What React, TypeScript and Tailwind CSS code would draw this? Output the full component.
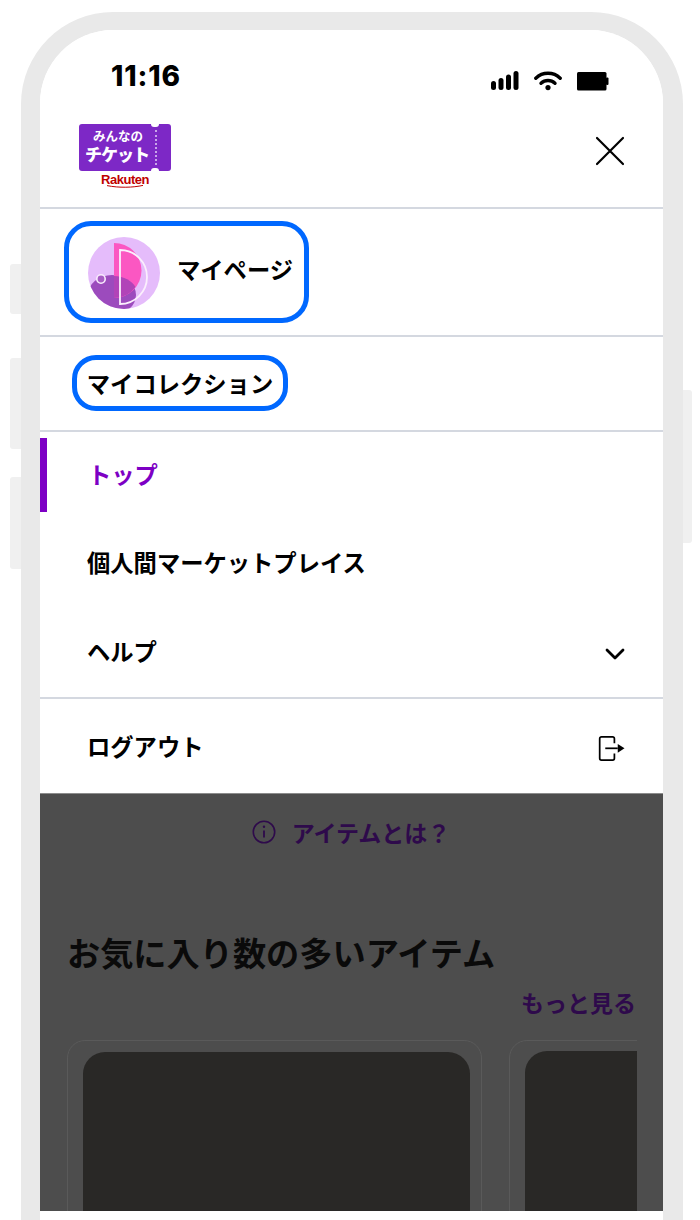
const JP = "font-['Noto_Sans_CJK_JP','Noto_Sans',sans-serif]"

function SignalIcon() {
  return (
    <svg width="28" height="20" viewBox="0 0 28 20" fill="#000">
      <rect x="0" y="10" width="5" height="9" rx="2.5" />
      <rect x="7.5" y="7" width="5" height="12" rx="2.5" />
      <rect x="15" y="3.5" width="5" height="15.5" rx="2.5" />
      <rect x="22.5" y="0" width="5" height="19" rx="2.5" />
    </svg>
  )
}

function WifiIcon() {
  return (
    <svg width="28" height="20" viewBox="0 0 28 20" fill="none" stroke="#000" strokeWidth="3.4" strokeLinecap="round">
      <path d="M1.8 7.2C8.6 .6 19.4 .6 26.2 7.2" />
      <path d="M7 12.3c4-3.8 10-3.8 14 0" />
      <circle cx="14" cy="16.6" r="2.6" fill="#000" stroke="none" />
    </svg>
  )
}

function BatteryIcon() {
  return (
    <svg width="32" height="19" viewBox="0 0 32 19" fill="#000">
      <rect x="0" y="0" width="29.5" height="18.5" rx="1.5" />
      <rect x="29" y="5.5" width="2.5" height="7.5" rx="1" />
    </svg>
  )
}

function StatusBar() {
  return (
    <div className="flex h-[82px] shrink-0 items-end justify-between pb-[12px] pl-[71px] pr-[54px]">
      <span className="mb-[7px] font-['Inter',sans-serif] text-[28px] leading-[34px] font-extrabold tracking-[0.9px] text-black">11:16</span>
      <div className="flex items-center gap-[15px] pb-[9px]">
        <SignalIcon />
        <WifiIcon />
        <BatteryIcon />
      </div>
    </div>
  )
}

function Logo() {
  return (
    <div className="flex w-[92px] flex-col items-center">
      <div className="relative h-[47px] w-[92px] rounded-[3px] bg-[#7d28c6] text-white">
        {/* ticket notches */}
        <div className="absolute -top-[3px] left-[72px] h-[6px] w-[8px] rounded-full bg-white" />
        <div className="absolute -bottom-[3px] left-[72px] h-[6px] w-[8px] rounded-full bg-white" />
        <div className="absolute top-[6px] bottom-[6px] left-[76px] border-l-2 border-dotted border-[#c9a5ea]" />
        <div className={`${JP} pt-[4px] pl-[14px] text-[12.5px] leading-[15px] font-bold whitespace-nowrap`}>みんなの</div>
        <div className={`${JP} pl-[6px] text-[17px] leading-[22px] font-black tracking-[-1px] whitespace-nowrap`}>チケット</div>
      </div>
      <div className="mt-[1px] font-['Liberation_Sans',sans-serif] text-[13px] leading-[15px] font-bold tracking-[-0.5px] text-[#bf0000]">Rakuten</div>
      <svg width="40" height="3" viewBox="0 0 40 3" className="-mt-[2px]">
        <path d="M2 0.6C14 3 28 2.6 38 0.4" stroke="#bf0000" strokeWidth="1" fill="none" />
      </svg>
    </div>
  )
}

function Avatar() {
  return (
    <svg width="72" height="72" viewBox="0 0 72 72" className="mt-[2px] shrink-0">
      <defs>
        <clipPath id="avatar-clip">
          <circle cx="36" cy="36" r="36" />
        </clipPath>
      </defs>
      <circle cx="36" cy="36" r="36" fill="#e5bcfb" />
      <g clipPath="url(#avatar-clip)">
        <ellipse cx="24" cy="58" rx="24" ry="20" fill="#9c4bbd" />
        <path d="M26 6A27.5 27.5 0 0 1 26 61Z" fill="#fb57c2" />
        <path d="M26 39C36 39 44 44 47.5 50A27.5 27.5 0 0 1 26 61Z" fill="#b144b8" />
      </g>
      <path d="M32 13A27 27 0 0 1 32 67Z" fill="none" stroke="#fbeffd" strokeWidth="1.8" />
      <circle cx="13" cy="42" r="4.2" fill="#a85dc4" stroke="#f8ecfc" strokeWidth="1.6" />
    </svg>
  )
}

function LogoutIcon() {
  return (
    <svg width="28" height="25" viewBox="0 0 28 26" fill="none" stroke="#000" strokeWidth="1.8" className="mt-[5px]">
      <path d="M16.5 7.5V2.8A1.8 1.8 0 0 0 14.7 1H3A1.8 1.8 0 0 0 1.2 2.8v20.4A1.8 1.8 0 0 0 3 25h11.7a1.8 1.8 0 0 0 1.8-1.8v-5" />
      <path d="M7 12.8h13" />
      <path d="M20 8.2l7 4.6-7 4.6z" fill="#000" stroke="none" />
    </svg>
  )
}

function Divider() {
  return <div className="h-[2px] shrink-0 bg-[#d4d8e0]" />
}

export default function App() {
  return (
    <div className={`relative h-[1220px] w-[700px] overflow-hidden bg-white ${JP}`}>
      {/* phone side buttons */}
      <div className="absolute top-[264px] left-[10px] h-[50px] w-[12px] rounded-l-[3px] bg-[#f0f0f0]" />
      <div className="absolute top-[358px] left-[10px] h-[91px] w-[12px] rounded-l-[3px] bg-[#f0f0f0]" />
      <div className="absolute top-[477px] left-[10px] h-[92px] w-[12px] rounded-l-[3px] bg-[#f0f0f0]" />
      <div className="absolute top-[390px] left-[682px] h-[153px] w-[10px] rounded-r-[3px] bg-[#f0f0f0]" />

      <div className="relative mt-[12px] ml-[21px] h-[1208px] w-[662px] rounded-t-[92px] border-t-[18px] border-r-[20px] border-l-[19px] border-[#e9e9e9] bg-white">
        <div className="flex h-[1190px] flex-col overflow-hidden rounded-t-[73px] bg-white">
          <StatusBar />

          {/* Header */}
          <div className="flex h-[95px] shrink-0 items-start justify-between pt-[12px] pl-[39px] pr-[38px]">
            <Logo />
            <svg width="30" height="30" viewBox="0 0 30 30" className="mt-[12px]" stroke="#000" strokeWidth="2.2" strokeLinecap="round">
              <path d="M2 2l26 26M28 2L2 28" />
            </svg>
          </div>
          <Divider />

          {/* My page */}
          <div className="flex h-[126px] shrink-0 items-start pt-[12px] pl-[24px]">
            <div className="flex h-[102px] w-[245px] items-center gap-[17px] rounded-[27px] border-[5px] border-[#0068ff] pl-[19px]">
              <Avatar />
              <span className="mb-[4px] text-[23.3px] leading-none font-bold whitespace-nowrap text-black">マイページ</span>
            </div>
          </div>
          <Divider />

          {/* My collection */}
          <div className="flex h-[93px] shrink-0 items-start pt-[18px] pl-[32px]">
            <div className="flex h-[56px] w-[216px] items-center justify-center rounded-[24px] border-[5px] border-[#0068ff]">
              <span className="mt-[2px] text-[23.3px] leading-none font-bold whitespace-nowrap text-black">マイコレクション</span>
            </div>
          </div>
          <Divider />

          {/* Menu */}
          <div className="mt-[6px] flex h-[74px] shrink-0 items-center border-l-[7px] border-[#7d00c4] pl-[41px]">
            <span className="mb-[1px] text-[23.3px] leading-none font-bold text-[#7d00c4]">トップ</span>
          </div>
          <div className="flex h-[98px] shrink-0 items-center pl-[47px]">
            <span className="mt-[3px] text-[23.3px] leading-none font-bold text-black">個人間マーケットプレイス</span>
          </div>
          <div className="flex h-[87px] shrink-0 items-center justify-between pb-[6px] pl-[47px] pr-[38px]">
            <span className="mt-[2px] text-[23.3px] leading-none font-bold text-black">ヘルプ</span>
            <svg width="20" height="14" viewBox="0 0 20 14" fill="none" stroke="#000" strokeWidth="2.8" strokeLinecap="round" strokeLinejoin="round" className="mt-[7px]">
              <path d="M2 3l8 8 8-8" />
            </svg>
          </div>
          <Divider />
          <div className="flex h-[94px] shrink-0 items-center justify-between pl-[47px] pr-[37px]">
            <span className="mt-[2px] text-[23.3px] leading-none font-bold text-black">ログアウト</span>
            <LogoutIcon />
          </div>

          {/* Dimmed page behind the menu */}
          <div className="h-[418px] shrink-0 overflow-hidden border-t border-[#8c8c8c] bg-[#4d4d4d]">
            <div className="mt-[24px] flex items-center justify-center gap-[16px] pr-[1px]">
              <svg width="24" height="24" viewBox="0 0 24 24" fill="none" stroke="#2e0a4b" strokeWidth="1.6">
                <circle cx="12" cy="12" r="10.7" />
                <path d="M12 10.5v7" strokeWidth="1.8" />
                <circle cx="12" cy="6.8" r="1.2" fill="#2e0a4b" stroke="none" />
              </svg>
              <span className="text-[23px] leading-[28px] font-bold text-[#2e0a4b]">アイテムとは？</span>
            </div>
            <div className="mt-[84px] pl-[27px] text-[33.2px] leading-[44px] font-bold whitespace-nowrap text-[#0a0a0a]">お気に入り数の多いアイテム</div>
            <div className="mt-[12px] pr-[27px] text-right text-[23px] leading-[32px] font-bold text-[#2e0a4b]">もっと見る</div>
            <div className="mt-[22px] ml-[27px] flex h-[200px] w-[570px] gap-[27px] overflow-hidden">
              <div className="h-[220px] w-[415px] shrink-0 rounded-t-[18px] border border-[#5a5a5a] px-[15px] pt-[11px]">
                <div className="h-full w-[387px] rounded-t-[22px] bg-[#292826]" />
              </div>
              <div className="h-[220px] w-[200px] shrink-0 rounded-t-[18px] border border-[#5a5a5a] pt-[10px] pl-[15px]">
                <div className="h-full rounded-tl-[22px] bg-[#292826]" />
              </div>
            </div>
          </div>
        </div>
      </div>
    </div>
  )
}
